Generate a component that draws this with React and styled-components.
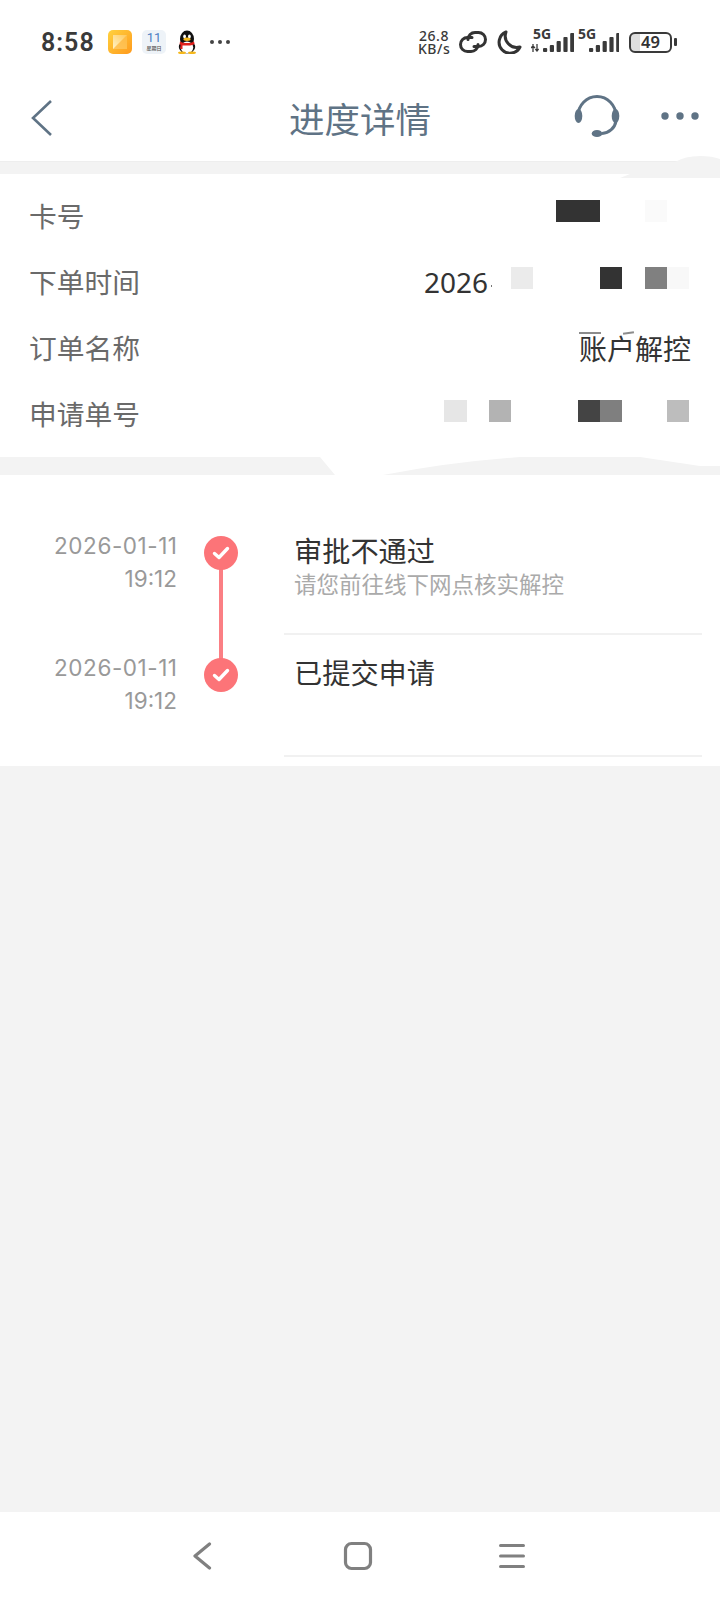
import React from "react";
import styled, { createGlobalStyle } from "styled-components";

const Global = createGlobalStyle`
  html, body { margin: 0; padding: 0; background: #fff; }
  * { box-sizing: border-box; }
  body { font-family: "Noto Sans", "Noto Sans CJK SC", sans-serif; }
`;

const Page = styled.div`
  position: relative;
  width: 720px;
  height: 1600px;
  display: flex;
  flex-direction: column;
  background: #f3f3f3;
  overflow: hidden;
`;

/* ---------- status bar ---------- */
const StatusBar = styled.div`
  height: 72px;
  flex: none;
  display: flex;
  align-items: center;
  padding: 12px 43px 0 41px;
  background: #fff;
  color: #333;
`;
const Clock = styled.div`
  font: 600 25px/1 Roboto, sans-serif;
  letter-spacing: 1px;
  color: #3a3a3a;
  width: 67px;
`;
const NoticeIcons = styled.div`
  display: flex;
  align-items: center;
`;
const OrangeTile = styled.svg`
  width: 24px;
  height: 24px;
  display: block;
`;
const CalendarTile = styled.div`
  width: 24px;
  height: 24px;
  margin-left: 10px;
  border-radius: 5px;
  background: #eef3f8;
  display: flex;
  flex-direction: column;
  align-items: center;
  color: #4f7fc4;
  font: 400 13px/14px Roboto, sans-serif;
  padding-top: 1px;
`;
const CalendarDay = styled.span`
  font: 500 5px/6px "Noto Sans CJK SC", sans-serif;
  color: #555;
`;
const Penguin = styled.svg`
  width: 22px;
  height: 24px;
  margin-left: 10px;
  display: block;
`;
const TinyDots = styled.svg`
  width: 22px;
  height: 6px;
  margin-left: 11px;
  display: block;
`;
const SystemIcons = styled.div`
  margin-left: auto;
  display: flex;
  align-items: center;
`;
const Speed = styled.div`
  width: 32px;
  font: 500 14px/13px "Noto Sans", sans-serif;
  letter-spacing: 0.5px;
  text-align: center;
  color: #3a3a3a;
`;
const StatusSvg = styled.svg`
  display: block;
  margin-left: ${(p) => p.$gap || 0}px;
`;
const Signal = styled.div`
  position: relative;
  width: ${(p) => p.$w}px;
  height: 26px;
  margin-left: ${(p) => p.$gap}px;
`;
const FiveG = styled.span`
  position: absolute;
  left: ${(p) => p.$x}px;
  top: -2px;
  font: 700 14px/14px "Noto Sans", sans-serif;
  color: #3a3a3a;
`;
const Battery = styled.div`
  width: 43px;
  height: 21px;
  margin-left: 10px;
  border: 2.5px solid #3a3a3a;
  border-radius: 6px;
  background: linear-gradient(90deg, #dedede 0 9px, #fff 9px);
  font: 600 16.5px/16px "Noto Sans", sans-serif;
  text-align: center;
  color: #333;
`;
const BatteryNub = styled.div`
  width: 3px;
  height: 8px;
  margin-left: 2px;
  background: #3a3a3a;
  border-radius: 1px;
`;

/* ---------- nav header ---------- */
const Header = styled.header`
  height: 89px;
  flex: none;
  display: grid;
  grid-template-columns: 1fr auto 1fr;
  align-items: center;
  background: #fff;
  color: #5f7385;
`;
const BackSlot = styled.div`
  padding-left: 30px;
  padding-top: 2px;
`;
const Title = styled.h1`
  margin: 3px 0 0;
  font: 400 35.5px/1.2 "Noto Sans CJK SC", sans-serif;
  color: #5f7385;
`;
const Actions = styled.div`
  display: flex;
  justify-content: flex-end;
  align-items: center;
  gap: 41px;
  padding: 0 21px 2px 0;
`;

/* ---------- bands ---------- */
const TopBand = styled.div`
  height: 13px;
  flex: none;
  background: #f3f3f3;
  border-top: 1px solid #eeeeee;
`;
const BandArt = styled.svg`
  display: block;
  flex: none;
`;
const TopSmudge = styled.svg`
  position: absolute;
  left: 600px;
  top: 150px;
  display: block;
`;

/* ---------- info card ---------- */
const InfoCard = styled.section`
  flex: none;
  height: 283px;
  padding: 10px 31px 9px 29px;
  background: #fff;
`;
const InfoRow = styled.div`
  height: 66px;
  display: flex;
  align-items: center;
  justify-content: space-between;
`;
const Label = styled.span`
  margin-bottom: 2px;
  font: 400 27.75px/1 "Noto Sans CJK SC", sans-serif;
  color: #6a6a6a;
`;
const Value = styled.div`
  display: flex;
  align-items: center;
  justify-content: flex-end;
  font: 400 28px/1 "Noto Sans", "Noto Sans CJK SC", sans-serif;
  color: #333;
`;
const Cell = styled.span`
  width: 22.25px;
  height: 22px;
  flex: none;
  margin-bottom: ${(p) => p.$lift}px;
  background: ${(p) => p.$c || "transparent"};
`;
const Year = styled.span`
  margin-bottom: 2px;
`;
const Speck = styled.span`
  width: 1px;
  height: 2px;
  margin: 6px 19px 0 3px;
  background: #777;
`;
const ClippedText = styled.span`
  position: relative;
  margin-right: -2px;
`;
const ClipMask = styled.span`
  position: absolute;
  left: 0;
  right: 0;
  top: -7px;
  height: 7px;
  background: #fff;
`;
const ClipLine = styled.span`
  position: absolute;
  left: ${(p) => p.$x}px;
  top: -3px;
  width: ${(p) => p.$w}px;
  height: 2px;
  background: #8c8c8c;
  transform: rotate(${(p) => p.$r || 0}deg);
`;

/* ---------- timeline ---------- */
const Timeline = styled.section`
  flex: none;
  height: 291px;
  padding: 38px 18px 0 0;
  background: #fff;
`;
const Step = styled.div`
  display: grid;
  grid-template-columns: 177px 107px 1fr;
  height: 122px;
`;
const When = styled.div`
  padding-top: 16px;
  font: 400 22.5px/33px Inter, sans-serif;
  color: #999;
  text-align: right;
`;
const WhenDate = styled.span`
  letter-spacing: 0.55px;
  margin-right: -0.55px;
`;
const Rail = styled.div`
  position: relative;
  padding: 23px 0 0 27px;
  &::before {
    content: ${(p) => (p.$line ? '""' : "none")};
    position: absolute;
    left: 42px;
    top: 40px;
    width: 4px;
    height: 122px;
    background: #fb7f84;
  }
`;
const Dot = styled.div`
  position: relative;
  width: 34px;
  height: 34px;
  border-radius: 50%;
  background: #fc7478;
  display: flex;
  align-items: center;
  justify-content: center;
`;
const StepBody = styled.div`
  padding: 18px 0 0 10px;
  border-bottom: 2px solid #f1f1f1;
`;
const StepTitle = styled.div`
  font: 400 28.2px/38px "Noto Sans CJK SC", sans-serif;
  color: #333;
`;
const StepNote = styled.div`
  margin-top: 1px;
  height: 26px;
  font: 400 22.5px/26px "Noto Sans CJK SC", sans-serif;
  color: #aaa;
  white-space: nowrap;
`;

const Spacer = styled.div`
  flex: 1;
`;

/* ---------- system nav ---------- */
const SystemNav = styled.nav`
  height: 88px;
  flex: none;
  background: #fff;
  display: flex;
  justify-content: center;
  align-items: flex-start;
  padding: 29px 5px 0 0;
`;
const NavSlot = styled.div`
  width: 154.5px;
  display: flex;
  justify-content: center;
`;

const Check = () => (
  <svg width="20" height="16" viewBox="0 0 20 16" fill="none">
    <path d="M3.5 8.5 8 12.5 16.5 3.5" stroke="#fff" strokeWidth="3.4" strokeLinecap="round" strokeLinejoin="round" />
  </svg>
);

const Bars = ({ w, x }) => {
  const h = [4, 7, 11, 15, 19];
  return (
    <svg width={w} height="26" viewBox={`0 0 ${w} 26`} style={{ display: "block", position: "absolute", left: 0, top: 0 }}>
      {h.map((v, i) => (
        <rect key={i} x={x + i * 6.8} y={23 - v} width="4.2" height={v} rx="1" fill="#3a3a3a" />
      ))}
    </svg>
  );
};

const row2 = ["#ebebeb", null, null, null, "#333", null, "#808080", "#f8f8f8"];
const row1 = ["#333", "#333", null, null, "#fafafa", null];
const row4 = ["#e6e6e6", null, "#b3b3b3", null, null, null, "#444", "#7f7f7f", null, null, "#bdbdbd"];

export default function App() {
  return (
    <Page>
      <Global />
      <StatusBar>
        <Clock>8:58</Clock>
        <NoticeIcons>
          <OrangeTile viewBox="0 0 24 24">
            <defs>
              <linearGradient id="og" x1="0" y1="0" x2="1" y2="1">
                <stop offset="0" stopColor="#ffd23f" />
                <stop offset="1" stopColor="#ff9a1c" />
              </linearGradient>
              <linearGradient id="og2" x1="0" y1="1" x2="1" y2="0">
                <stop offset="0" stopColor="#fff3c9" />
                <stop offset="1" stopColor="#ffc95c" />
              </linearGradient>
            </defs>
            <rect width="24" height="24" rx="5" fill="url(#og)" />
            <rect x="5" y="5" width="14" height="14" fill="url(#og2)" />
            <path d="M5 19 19 5v14z" fill="#ffb53a" opacity=".75" />
          </OrangeTile>
          <CalendarTile>
            11
            <CalendarDay>星期日</CalendarDay>
          </CalendarTile>
          <Penguin viewBox="0 0 22 24">
            <ellipse cx="11" cy="9" rx="7" ry="8.5" fill="#111" />
            <ellipse cx="11" cy="17" rx="8.2" ry="6.5" fill="#111" />
            <ellipse cx="11" cy="17.5" rx="6.2" ry="6" fill="#fff" />
            <ellipse cx="8.6" cy="6.5" rx="1.4" ry="2" fill="#fff" />
            <ellipse cx="13.4" cy="6.5" rx="1.4" ry="2" fill="#fff" />
            <ellipse cx="11" cy="9.3" rx="3.6" ry="1.7" fill="#f5b81c" />
            <path d="M4 11.5c4 2 10 2 14 0l.6 2.6c-1.5.9-3 1.3-4.6 1.4l-.5 0H6.5v3.5H4.3l.3-4.2-1-.6z" fill="#e0201c" />
            <ellipse cx="6" cy="22.8" rx="4" ry="1.2" fill="#f5b81c" />
            <ellipse cx="16" cy="22.8" rx="4" ry="1.2" fill="#f5b81c" />
          </Penguin>
          <TinyDots viewBox="0 0 22 6">
            <circle cx="3" cy="3" r="2" fill="#444" />
            <circle cx="11" cy="3" r="2" fill="#444" />
            <circle cx="19" cy="3" r="2" fill="#444" />
          </TinyDots>
        </NoticeIcons>
        <SystemIcons>
          <Speed>
            26.8
            <br />
            KB/s
          </Speed>
          <StatusSvg width="30" height="22" viewBox="0 0 30 22" $gap={8} fill="none" stroke="#333" strokeWidth="3" strokeLinecap="round">
            <path d="M14 6.5H9.5a7 7 0 0 0 0 14H13a7 7 0 0 0 7-7" />
            <path d="M16 15.5h4.500a7 7 0 0 0 0-14H17a7 7 0 0 0-7 7" />
          </StatusSvg>
          <StatusSvg width="25" height="24" viewBox="0 0 25 24" $gap={9} fill="none" stroke="#333" strokeWidth="3" strokeLinejoin="round">
            <path d="M9 2A11 11 0 1 0 23 17 11.5 11.5 0 0 1 9 2Z" />
          </StatusSvg>
          <Signal $w={43} $gap={9}>
            <FiveG $x={2}>5G</FiveG>
            <Bars w={43} x={12} />
            <StatusSvg width="8" height="8" viewBox="0 0 8 8" style={{ position: "absolute", left: 0, top: 15 }}>
              <path d="M2 0v8M0 4l2-2 2 2M6 0v8M4.4 5 6 7l1.6-2" stroke="#3a3a3a" strokeWidth="1.3" fill="none" />
            </StatusSvg>
          </Signal>
          <Signal $w={41} $gap={4}>
            <FiveG $x={0}>5G</FiveG>
            <Bars w={41} x={11} />
          </Signal>
          <Battery>49</Battery>
          <BatteryNub />
        </SystemIcons>
      </StatusBar>

      <Header>
        <BackSlot>
          <svg width="24" height="38" viewBox="0 0 24 38" fill="none" style={{ display: "block" }}>
            <path d="M21 2 3 19l18 17" stroke="#5f7385" strokeWidth="2.6" />
          </svg>
        </BackSlot>
        <Title>进度详情</Title>
        <Actions>
          <svg width="46" height="44" viewBox="0 0 46 44" style={{ display: "block" }}>
            <path d="M4 22A19 19.5 0 0 1 42 22" fill="none" stroke="#5f7385" strokeWidth="3" />
            <ellipse cx="4.5" cy="22" rx="3.8" ry="7" fill="#5f7385" />
            <ellipse cx="41.5" cy="22" rx="3.8" ry="7" fill="#5f7385" />
            <path d="M42 27c-1 7-7 12-14 12.5" fill="none" stroke="#5f7385" strokeWidth="3" />
            <ellipse cx="23" cy="39.5" rx="5.3" ry="3.6" fill="#5f7385" />
          </svg>
          <svg width="38" height="8" viewBox="0 0 38 8" style={{ display: "block" }}>
            <circle cx="4" cy="4" r="3.7" fill="#5f7385" />
            <circle cx="19" cy="4" r="3.7" fill="#5f7385" />
            <circle cx="34" cy="4" r="3.7" fill="#5f7385" />
          </svg>
        </Actions>
      </Header>

      <TopBand />

      <InfoCard>
        <InfoRow>
          <Label>卡号</Label>
          <Value>
            {row1.map((c, i) => (
              <Cell key={i} $c={c} $lift={12} />
            ))}
          </Value>
        </InfoRow>
        <InfoRow>
          <Label>下单时间</Label>
          <Value>
            <Year>2026</Year>
            <Speck />
            {row2.map((c, i) => (
              <Cell key={i} $c={c} $lift={11} />
            ))}
          </Value>
        </InfoRow>
        <InfoRow>
          <Label>订单名称</Label>
          <Value>
            <ClippedText>
              <ClipMask />
              <ClipLine $x={0} $w={22} />
              <ClipLine $x={44} $w={11} $r={-8} />
              账户解控
            </ClippedText>
          </Value>
        </InfoRow>
        <InfoRow>
          <Label>申请单号</Label>
          <Value>
            {row4.map((c, i) => (
              <Cell key={i} $c={c} $lift={8} />
            ))}
          </Value>
        </InfoRow>
      </InfoCard>

      <BandArt width="720" height="18" viewBox="0 0 720 18">
        <rect width="720" height="18" fill="#f3f3f3" />
        <path d="M320 0 335 18H383Q450 5 520 0Z" fill="#fff" />
        <path d="M640 0 700 9H720V0Z" fill="#fff" />
      </BandArt>

      <Timeline>
        <Step>
          <When>
            <WhenDate>2026-01-11</WhenDate>
            <br />
            19:12
          </When>
          <Rail $line>
            <Dot>
              <Check />
            </Dot>
          </Rail>
          <StepBody>
            <StepTitle>审批不通过</StepTitle>
            <StepNote>请您前往线下网点核实解控</StepNote>
          </StepBody>
        </Step>
        <Step>
          <When>
            <WhenDate>2026-01-11</WhenDate>
            <br />
            19:12
          </When>
          <Rail>
            <Dot>
              <Check />
            </Dot>
          </Rail>
          <StepBody>
            <StepTitle>已提交申请</StepTitle>
          </StepBody>
        </Step>
      </Timeline>

      <Spacer />

      <SystemNav>
        <NavSlot>
          <svg width="20" height="30" viewBox="0 0 20 30" fill="none" style={{ display: "block" }}>
            <path d="M16.5 3 2 15l14.5 12" stroke="#808080" strokeWidth="3.2" strokeLinecap="round" strokeLinejoin="round" />
          </svg>
        </NavSlot>
        <NavSlot>
          <svg width="30" height="30" viewBox="0 0 30 30" fill="none" style={{ display: "block" }}>
            <rect x="2.5" y="2.5" width="25" height="25" rx="6" stroke="#808080" strokeWidth="3.2" />
          </svg>
        </NavSlot>
        <NavSlot>
          <svg width="28" height="30" viewBox="0 0 28 30" fill="none" style={{ display: "block" }}>
            <path d="M2.5 4.5h23M2.5 15h23M2.5 25.5h23" stroke="#808080" strokeWidth="3" strokeLinecap="round" />
          </svg>
        </NavSlot>
      </SystemNav>

      <TopSmudge width="120" height="30" viewBox="0 0 120 30">
        <path d="M75 12Q85 6 100 6 112 6 120 9V28H20L30 24H75Z" fill="#f3f3f3" />
      </TopSmudge>
    </Page>
  );
}
